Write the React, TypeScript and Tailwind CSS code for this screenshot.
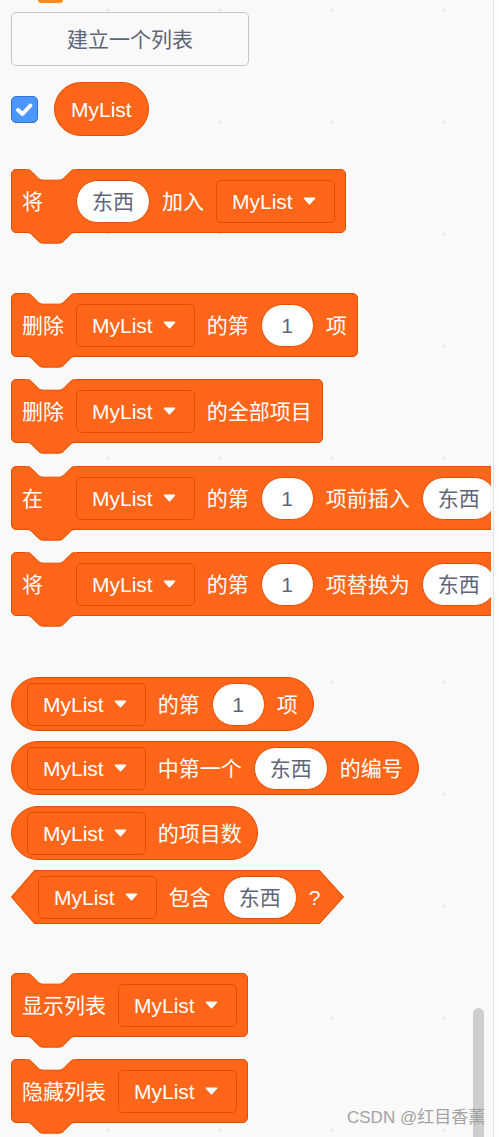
import React from "react";

const FONT = "font-['Liberation_Sans','Noto_Sans_CJK_SC',sans-serif]";

const CURVE =
  "c2.67,0 4,1.33 5.33,2.67 l5.33,5.33 c1.33,1.33 2.67,2.67 5.33,2.67 h16 c2.67,0 4,-1.33 5.33,-2.67 l5.33,-5.33 c1.33,-1.33 2.67,-2.67 5.33,-2.67";

function TopNotch() {
  return (
    <svg
      className="pointer-events-none absolute -top-px left-[15px] overflow-visible"
      width="48"
      height="12"
    >
      <path d={`M-1,-1 L-1,0.5 L0,0.5 ${CURVE} L49,0.5 L49,-1 Z`} fill="#f9f9f9" />
      <path d={`M0,0.5 ${CURVE}`} fill="none" stroke="#e64d00" strokeWidth="1" />
    </svg>
  );
}

function BottomTab() {
  return (
    <svg
      className="pointer-events-none absolute left-[15px] top-full overflow-visible"
      width="48"
      height="12"
    >
      <path d={`M0,-0.6 L0,0.5 ${CURVE} L48,-0.6 Z`} fill="#ff661a" />
      <path d={`M0,0.5 ${CURVE}`} fill="none" stroke="#e64d00" strokeWidth="1" />
    </svg>
  );
}

function Arrow() {
  return (
    <svg width="13" height="8" viewBox="0 0 13 8" className="shrink-0">
      <path
        d="M1.5 1.2 H11.5 L6.5 6.6 Z"
        fill="#ffffff"
        stroke="#ffffff"
        strokeWidth="1.6"
        strokeLinejoin="round"
      />
    </svg>
  );
}

function Label({ children, first }: { children: React.ReactNode; first?: boolean }) {
  return (
    <span
      className={
        first
          ? "min-w-[42px] whitespace-nowrap text-[21px] leading-none text-white"
          : "whitespace-nowrap text-[21px] leading-none text-white"
      }
    >
      {children}
    </span>
  );
}

function Oval({ children }: { children: React.ReactNode }) {
  return (
    <div className="flex h-[43px] min-w-[53px] shrink-0 items-center justify-center rounded-full border border-[#e64d00] bg-white px-[15px] text-[21px] leading-none text-[#5f6579]">
      {children}
    </div>
  );
}

function Dropdown() {
  return (
    <div className="flex h-[43px] shrink-0 items-center gap-[10px] rounded-[5px] border border-[#e64d00] bg-[#ff661a] pl-[15px] pr-[18px]">
      <span className="whitespace-nowrap text-[21px] leading-none text-white">MyList</span>
      <Arrow />
    </div>
  );
}

function Stack({ children, className }: { children: React.ReactNode; className: string }) {
  return (
    <div
      className={
        "relative flex h-[64px] w-max shrink-0 items-center gap-[12px] rounded-[5px] border border-[#e64d00] bg-[#ff661a] px-[10px] " +
        className
      }
    >
      {children}
      <TopNotch />
      <BottomTab />
    </div>
  );
}

function Reporter({ children, className }: { children: React.ReactNode; className: string }) {
  return (
    <div
      className={
        "flex h-[54px] w-max shrink-0 items-center gap-[12px] rounded-full border border-[#e64d00] bg-[#ff661a] px-[15px] " +
        className
      }
    >
      {children}
    </div>
  );
}

function Boolean({ className }: { className: string }) {
  return (
    <div className={"flex h-[54px] w-max shrink-0 " + className}>
      <svg width="23" height="54" className="shrink-0">
        <polygon points="23.5,0 0,27 23.5,54" fill="#ff661a" />
        <polyline points="23.5,0.5 0.6,27 23.5,53.5" fill="none" stroke="#e64d00" strokeWidth="1" />
      </svg>
      <div className="flex h-[54px] items-center gap-[12px] border-y border-[#e64d00] bg-[#ff661a] pl-[4px]">
        <Dropdown />
        <Label>包含</Label>
        <Oval>东西</Oval>
        <Label>?</Label>
      </div>
      <svg width="24" height="54" className="shrink-0">
        <polygon points="-0.5,0 24,27 -0.5,54" fill="#ff661a" />
        <polyline points="-0.5,0.5 23.4,27 -0.5,53.5" fill="none" stroke="#e64d00" strokeWidth="1" />
      </svg>
    </div>
  );
}

export default function App() {
  return (
    <div className={"relative flex h-[1137px] w-[499px] overflow-hidden bg-[#fcfcfc] " + FONT}>
      <div className="relative h-[1137px] w-[491px] shrink-0 overflow-hidden bg-[#f9f9f9] bg-[radial-gradient(circle,#ececec_1.2px,transparent_2px)] bg-[length:112px_112px] bg-[position:52px_-46px]">
        <div className="flex flex-col items-start pl-[11px]">
          <div className="ml-[27px] h-[3px] w-[25px] rounded-b-full bg-[#ff8c1a]" />

          <div className="mt-[9px] flex h-[54px] w-[238px] items-center justify-center rounded-[5px] border border-[#c6c6c6] text-[21px] leading-none text-[#5f6579]">
            建立一个列表
          </div>

          <div className="mt-[16px] flex items-center gap-[16px]">
            <div className="flex h-[27px] w-[27px] items-center justify-center rounded-[5px] border border-[#3373cc] bg-[#4c97ff]">
              <svg width="25" height="25" viewBox="0 0 25 25">
                <polyline
                  points="6,13 10.5,17 18.5,8.5"
                  fill="none"
                  stroke="#ffffff"
                  strokeWidth="4"
                  strokeLinecap="round"
                  strokeLinejoin="round"
                />
              </svg>
            </div>
            <div className="flex h-[54px] items-center rounded-full border border-[#e64d00] bg-[#ff661a] px-[16px]">
              <span className="text-[21px] leading-none text-white">MyList</span>
            </div>
          </div>

          <Stack className="mt-[33px]">
            <Label first>将</Label>
            <Oval>东西</Oval>
            <Label>加入</Label>
            <Dropdown />
          </Stack>

          <Stack className="mt-[60px]">
            <Label first>删除</Label>
            <Dropdown />
            <Label>的第</Label>
            <Oval>1</Oval>
            <Label>项</Label>
          </Stack>

          <Stack className="mt-[22px]">
            <Label first>删除</Label>
            <Dropdown />
            <Label>的全部项目</Label>
          </Stack>

          <Stack className="mt-[23px]">
            <Label first>在</Label>
            <Dropdown />
            <Label>的第</Label>
            <Oval>1</Oval>
            <Label>项前插入</Label>
            <Oval>东西</Oval>
          </Stack>

          <Stack className="mt-[22px]">
            <Label first>将</Label>
            <Dropdown />
            <Label>的第</Label>
            <Oval>1</Oval>
            <Label>项替换为</Label>
            <Oval>东西</Oval>
          </Stack>

          <Reporter className="mt-[61px]">
            <Dropdown />
            <Label>的第</Label>
            <Oval>1</Oval>
            <Label>项</Label>
          </Reporter>

          <Reporter className="mt-[10px]">
            <Dropdown />
            <Label>中第一个</Label>
            <Oval>东西</Oval>
            <Label>的编号</Label>
          </Reporter>

          <Reporter className="mt-[11px]">
            <Dropdown />
            <Label>的项目数</Label>
          </Reporter>

          <Boolean className="mt-[10px]" />

          <Stack className="mt-[49px]">
            <Label first>显示列表</Label>
            <Dropdown />
          </Stack>

          <Stack className="mt-[22px]">
            <Label first>隐藏列表</Label>
            <Dropdown />
          </Stack>
        </div>
      </div>
      <div className="h-[1137px] w-[2px] shrink-0 bg-[#f9f9f9]" />
      <div className="h-[1137px] w-px shrink-0 bg-[#e2e2e2]" />
      <div className="h-[1137px] flex-1 bg-[#fdfdfd]" />

      <div className="absolute left-[473px] top-[1008px] h-[140px] w-[11px] rounded-full bg-[#cecece]" />

      <div className="absolute left-[347px] top-[1107px] whitespace-nowrap text-[17px] leading-[22px] text-[#a3a3a3]">
        CSDN @红目香薰
      </div>
    </div>
  );
}
